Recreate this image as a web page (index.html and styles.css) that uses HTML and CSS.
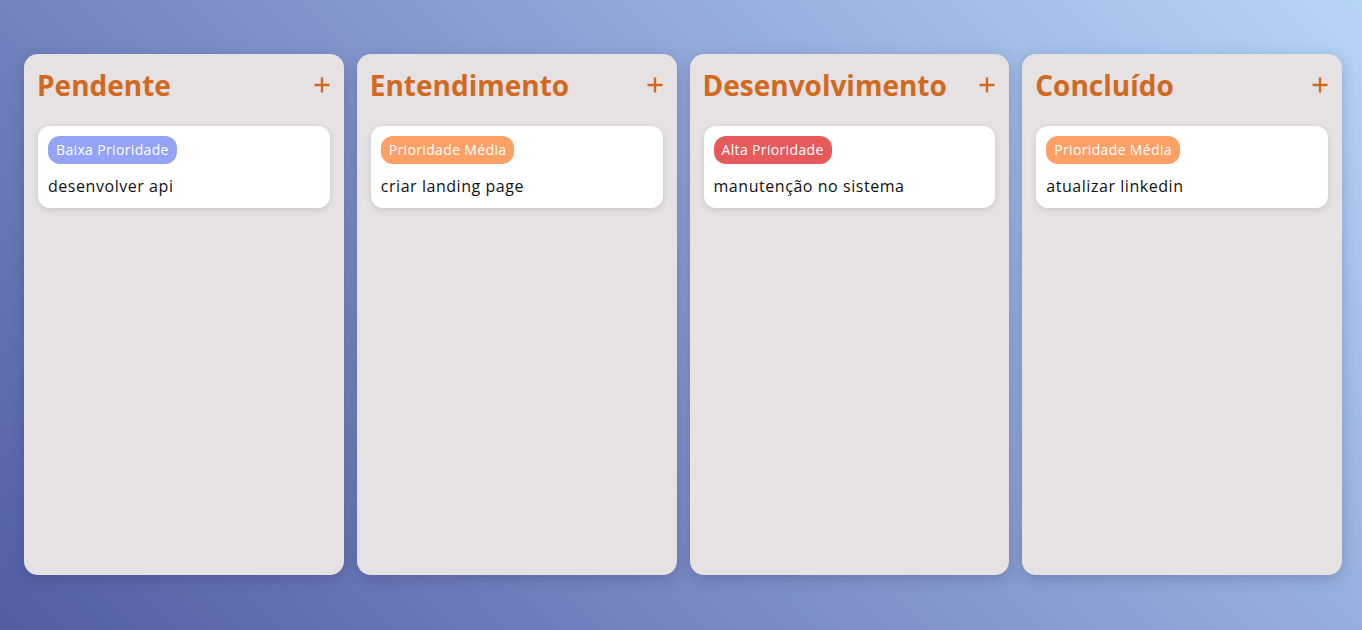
FILE: index.html
```html
<!DOCTYPE html>
<html lang="pt-BR">
<head>
<meta charset="utf-8">
<title>Kanban</title>
<link rel="stylesheet" href="styles.css">
</head>
<body>
<main class="board">
  <section class="column">
    <header class="column-header">
      <h2 class="column-title">Pendente</h2>
      <button class="add-btn" aria-label="Adicionar"><svg viewBox="0 0 18 18" width="18" height="18"><path d="M9 1.5v15M1.5 9h15" /></svg></button>
    </header>
    <div class="cards">
      <article class="card">
        <span class="badge badge-low">Baixa Prioridade</span>
        <p class="card-text">desenvolver api</p>
      </article>
    </div>
  </section>
  <section class="column">
    <header class="column-header">
      <h2 class="column-title">Entendimento</h2>
      <button class="add-btn" aria-label="Adicionar"><svg viewBox="0 0 18 18" width="18" height="18"><path d="M9 1.5v15M1.5 9h15" /></svg></button>
    </header>
    <div class="cards">
      <article class="card">
        <span class="badge badge-mid">Prioridade Média</span>
        <p class="card-text">criar landing page</p>
      </article>
    </div>
  </section>
  <section class="column">
    <header class="column-header">
      <h2 class="column-title">Desenvolvimento</h2>
      <button class="add-btn" aria-label="Adicionar"><svg viewBox="0 0 18 18" width="18" height="18"><path d="M9 1.5v15M1.5 9h15" /></svg></button>
    </header>
    <div class="cards">
      <article class="card">
        <span class="badge badge-high">Alta Prioridade</span>
        <p class="card-text">manutenção no sistema</p>
      </article>
    </div>
  </section>
  <section class="column">
    <header class="column-header">
      <h2 class="column-title">Concluído</h2>
      <button class="add-btn" aria-label="Adicionar"><svg viewBox="0 0 18 18" width="18" height="18"><path d="M9 1.5v15M1.5 9h15" /></svg></button>
    </header>
    <div class="cards">
      <article class="card">
        <span class="badge badge-mid">Prioridade Média</span>
        <p class="card-text">atualizar linkedin</p>
      </article>
    </div>
  </section>
</main>
</body>
</html>
```
FILE: styles.css
```css
* { box-sizing: border-box; }
html, body { margin: 0; height: 100%; }
body {
  font-family: "Open Sans", "Noto Sans", sans-serif;
  background: linear-gradient(45deg, #525da3 0%, #8598cd 50%, #b5d5f7 100%);
  min-height: 630px;
  overflow: hidden;
}
.board {
  display: flex;
  gap: 13px;
  padding: 54px 20px 0 24px;
}
.column {
  flex: 1 1 0;
  height: 521px;
  background: #e6e1e2;
  border-radius: 14px;
  padding: 13px 14px 14px;
  box-shadow: 0 4px 14px rgba(30, 35, 80, 0.22);
}
.column-header {
  display: flex;
  align-items: center;
  justify-content: space-between;
  height: 36px;
  margin-bottom: 23px;
}
.column-title {
  margin: 0 0 0 -1px;
  font-size: 28px;
  line-height: 36px;
  font-weight: 700;
  color: #d2691e;
}
.add-btn {
  border: 0;
  background: none;
  padding: 0;
  width: 18px;
  height: 18px;
  margin-right: -1px;
  display: flex;
  cursor: pointer;
}
.add-btn svg path {
  stroke: #d2691e;
  stroke-width: 2.4;
  fill: none;
}
.cards {
  display: flex;
  flex-direction: column;
  gap: 10px;
}
.card {
  background: #ffffff;
  border-radius: 12px;
  padding: 10px 10px 10px;
  box-shadow: 0 2px 6px rgba(0, 0, 0, 0.12);
  display: flex;
  flex-direction: column;
  align-items: flex-start;
}
.badge {
  display: inline-block;
  font-size: 14px;
  line-height: 20px;
  padding: 4px 8px;
  border-radius: 12px;
  color: #ffffff;
  letter-spacing: 0.35px;
  margin-bottom: 10px;
}
.badge-low { background: #94a3f6; }
.badge-mid { background: #fca066; }
.badge-high { background: #e75a5b; }
.card-text {
  margin: 0;
  font-size: 16px;
  line-height: 24px;
  letter-spacing: 0.55px;
  color: #111111;
}
```
